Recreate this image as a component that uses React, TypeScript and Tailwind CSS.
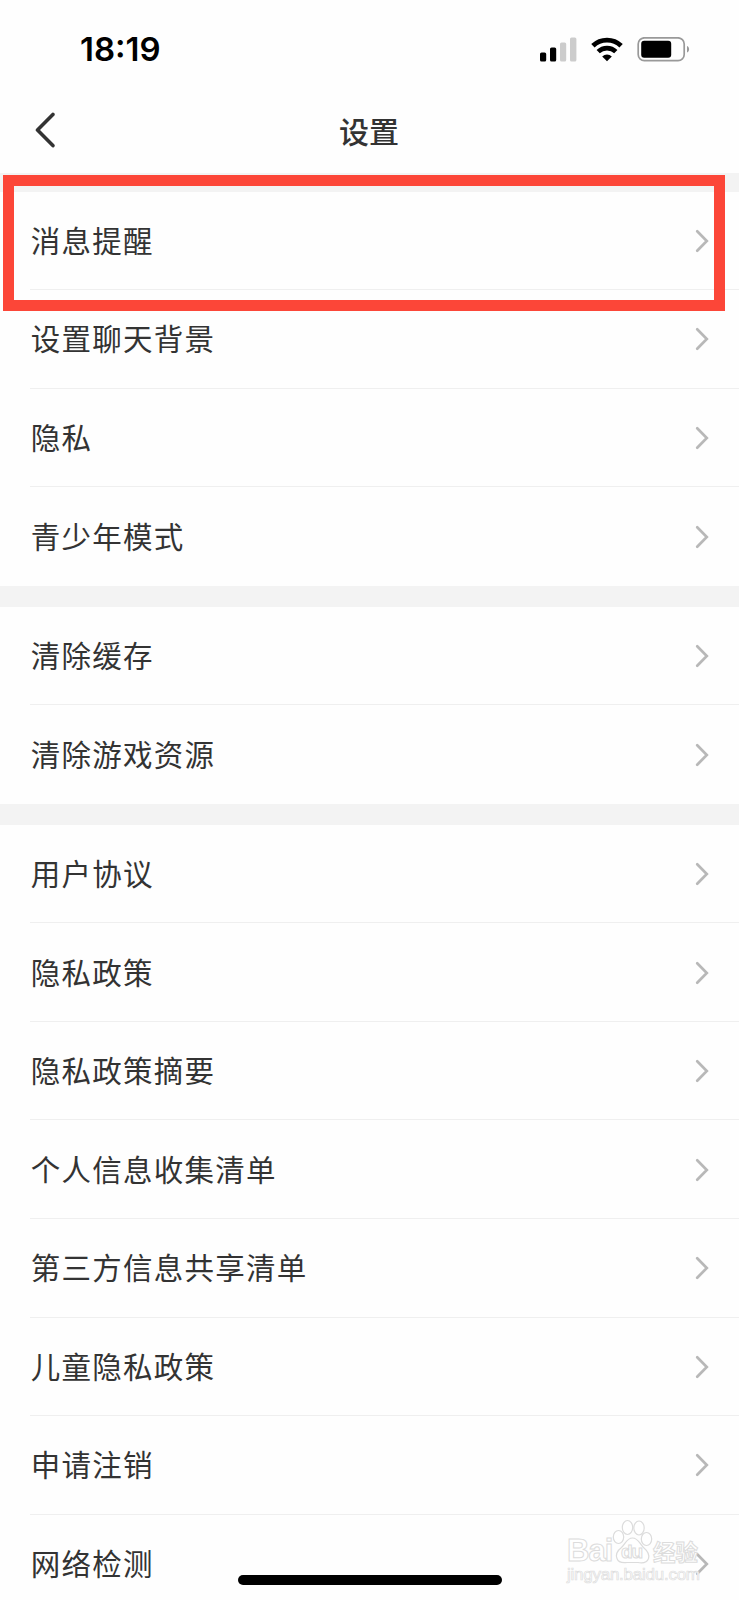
type RowProps = {
  label: string;
  last?: boolean;
};

const groups = [
  ['消息提醒', '设置聊天背景', '隐私', '青少年模式'],
  ['清除缓存', '清除游戏资源'],
  [
    '用户协议',
    '隐私政策',
    '隐私政策摘要',
    '个人信息收集清单',
    '第三方信息共享清单',
    '儿童隐私政策',
    '申请注销',
    '网络检测',
  ],
];

const StatusBar = () => {
  return (
    <div className="flex h-[98px] items-center justify-between pl-[80px] pr-[49px]">
      <span className="font-['Inter',sans-serif] text-[33px] leading-none font-semibold text-black">18:19</span>
      <div className="flex items-center">
        <svg width="37" height="25" viewBox="0 0 37 25" className="mr-[14px]">
          <rect x="0" y="15.5" width="6.2" height="9" rx="1.6" fill="#000" />
          <rect x="10" y="10.5" width="6.2" height="14" rx="1.6" fill="#000" />
          <rect x="20" y="5.5" width="6.2" height="19" rx="1.6" fill="#ccc" />
          <rect x="30" y="0.5" width="6.4" height="24" rx="1.6" fill="#ccc" />
        </svg>
        <svg width="32" height="25" viewBox="0 0 32 25" className="mr-[14px]" fill="none" stroke="#000">
          <path d="M1.9 8.8a20.2 20.2 0 0 1 28.2 0" strokeWidth="4.8" />
          <path d="M7.2 14.7a12.6 12.6 0 0 1 17.6 0" strokeWidth="4.6" />
          <path d="M16 24.3l-4.8-4.9a7 7 0 0 1 9.6 0z" fill="#000" stroke="none" />
        </svg>
        <svg width="53" height="25" viewBox="0 0 53 25">
          <rect x="1.2" y="0.8" width="46" height="22.8" rx="6.2" fill="none" stroke="#999" strokeWidth="1.7" />
          <rect x="4.2" y="3.7" width="30" height="17" rx="3" fill="#000" />
          <path d="M50 9c2.8 1 2.8 5.6 0 6.6z" fill="#999" />
        </svg>
      </div>
    </div>
  );
};

const Header = () => {
  return (
    <header className="flex h-[75px] items-center pb-[11px]">
      <button aria-label="返回" className="ml-[34px] w-[60px]">
        <svg width="21" height="36" viewBox="0 0 21 36" fill="none" stroke="#333" strokeWidth="3.6">
          <path d="M18.9 2.4L3.5 18l15.4 15.6" strokeLinecap="round" strokeLinejoin="round" />
        </svg>
      </button>
      <h1 className="flex-1 pr-[95px] pb-px text-center text-[30px] leading-none font-medium">设置</h1>
    </header>
  );
};

const Row = ({ label, last }: RowProps) => {
  return (
    <li
      className={`ml-[30px] flex h-[98.55px] items-center justify-between border-[#efefef] pr-[30px] ${
        last ? '' : 'border-b'
      }`}
    >
      <span className="pb-[1.6px] pl-[0.7px] text-[29.5px] leading-none tracking-[1.25px]">{label}</span>
      <svg width="14" height="25" viewBox="0 0 14 25" fill="none" stroke="#b8b8b8" strokeWidth="2.7">
        <path d="M2.2 3.2L11.8 13l-9.6 9.8" strokeLinecap="round" />
      </svg>
    </li>
  );
};

const Watermark = () => {
  return (
    <div className="absolute top-[1519px] left-[567px] w-[134px] leading-none text-white [-webkit-text-stroke:1px_#dcdcdc]">
      <div className="flex h-[46px] items-end">
        <span className="w-[45px] font-['Liberation_Sans',sans-serif] text-[31px] leading-[28px] font-bold tracking-[-1px]">
          Bai
        </span>
        <div className="relative h-[46px] w-[41px]">
          <svg width="41" height="46" viewBox="0 0 41 46" fill="#fff" stroke="#dcdcdc" strokeWidth="1.2">
            <ellipse cx="6.5" cy="18" rx="5.2" ry="6.5" />
            <ellipse cx="15.5" cy="8.5" rx="5.2" ry="7" />
            <ellipse cx="27" cy="9" rx="5.2" ry="7" />
            <ellipse cx="34.5" cy="20" rx="5.2" ry="6.5" />
            <path d="M20.5 19c-6 0-7 6-11 9.5-4 3-6 7-4.5 11 1.5 4.5 6 4.500 10 4h11c5 .8 9 .5 10.500-4 1.200-4-1-7.500-4.500-10.500-4.500-4-5.500-10-11.500-10z" />
          </svg>
          <span className="absolute top-[23px] left-[9px] font-['Liberation_Sans',sans-serif] text-[19px] font-bold tracking-[-1px]">
            du
          </span>
        </div>
        <span className="pb-px text-[22.5px] leading-[25px] font-bold">经验</span>
      </div>
      <div className="font-['Liberation_Sans',sans-serif] text-[17px] leading-[19px] tracking-[-0.25px] text-[#fdfdfd] [-webkit-text-stroke:0.7px_#dedede]">
        jingyan.baidu.com
      </div>
    </div>
  );
};

const App = () => {
  return (
    <div className="relative h-[1600px] w-[739px] overflow-hidden bg-[#fefefe] font-['Noto_Sans_CJK_SC',sans-serif] text-[#333]">
      <StatusBar />
      <Header />
      <main>
        {groups.map((rows, idx) => (
          <section key={idx}>
            <div className={`bg-[#f3f3f3] ${idx === 0 ? 'h-[18.5px]' : 'h-[21px]'}`} />
            <ul>
              {rows.map((label, i) => (
                <Row key={label} label={label} last={i === rows.length - 1} />
              ))}
            </ul>
          </section>
        ))}
      </main>

      {/* highlight around the first row */}
      <div className="absolute top-[175px] left-[3px] h-[136px] w-[722px] border-[11px] border-[#fc4638]" />
      <Watermark />
      {/* home indicator */}
      <div className="absolute top-[1575px] left-[238px] h-[10px] w-[264px] rounded-full bg-black" />
    </div>
  );
};

export default App;
